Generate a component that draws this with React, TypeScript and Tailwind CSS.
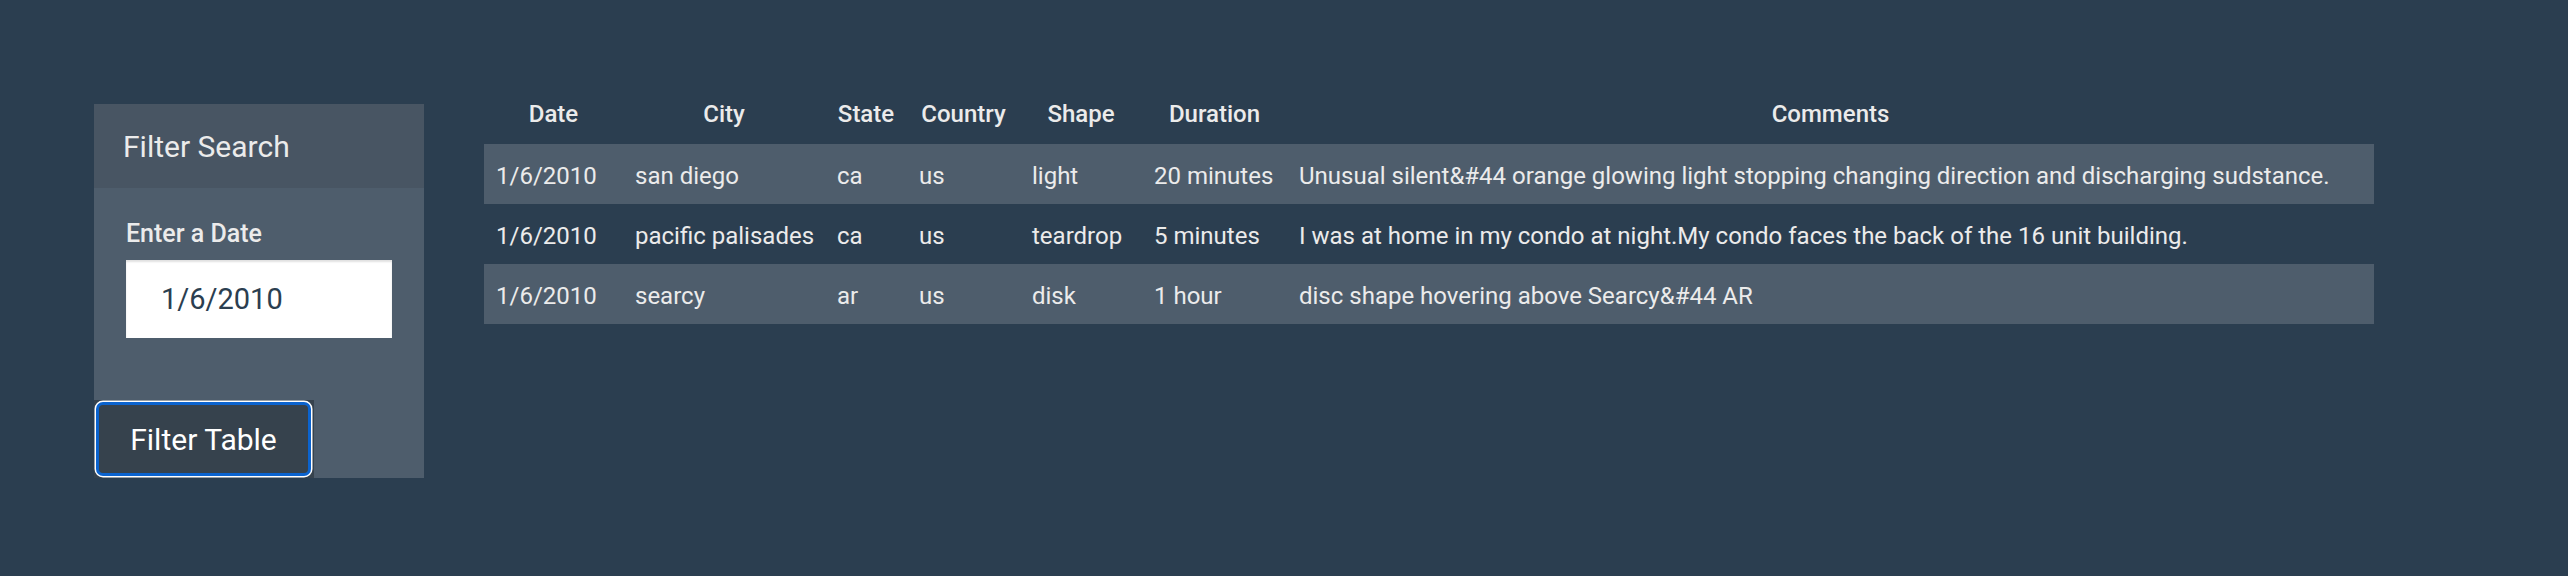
const columns = [
  { key: "date", label: "Date", width: "w-[139px]" },
  { key: "city", label: "City", width: "w-[202px]" },
  { key: "state", label: "State", width: "w-[82px]" },
  { key: "country", label: "Country", width: "w-[113px]" },
  { key: "shape", label: "Shape", width: "w-[122px]" },
  { key: "duration", label: "Duration", width: "w-[145px]" },
  { key: "comments", label: "Comments", width: "w-[1087px]" },
] as const;

type Sighting = Record<(typeof columns)[number]["key"], string>;

const sightings: Sighting[] = [
  {
    date: "1/6/2010",
    city: "san diego",
    state: "ca",
    country: "us",
    shape: "light",
    duration: "20 minutes",
    comments:
      "Unusual silent&#44 orange glowing light stopping changing direction and discharging sudstance.",
  },
  {
    date: "1/6/2010",
    city: "pacific palisades",
    state: "ca",
    country: "us",
    shape: "teardrop",
    duration: "5 minutes",
    comments: "I was at home in my condo at night.My condo faces the back of the 16 unit building.",
  },
  {
    date: "1/6/2010",
    city: "searcy",
    state: "ar",
    country: "us",
    shape: "disk",
    duration: "1 hour",
    comments: "disc shape hovering above Searcy&#44 AR",
  },
];

function FilterPanel() {
  return (
    <aside className="mt-[20px] w-[330px] shrink-0 bg-[#4e5d6c]">
      <div className="flex h-[84px] items-center bg-[#485563] pl-[29px] text-[30px]">
        Filter Search
      </div>
      <div className="px-[32px] pt-[31px]">
        <label className="mb-[11px] block text-[25px] font-medium leading-[30px]">
          Enter a Date
        </label>
        <input
          type="text"
          defaultValue="1/6/2010"
          className="block h-[78px] w-[266px] bg-white pl-[35px] text-[29px] text-[#2b3e50] shadow-[inset_0_2px_2px_rgba(0,0,0,0.12)] outline-none"
        />
      </div>
      <div className="mt-[62px] h-[78px] w-[220px] bg-[#36424d] p-[2px]">
        <button
          type="button"
          className="h-[74px] w-[215px] rounded-[7px] border-[3px] border-[#0b63ce] bg-[#36424d] text-[30px] text-white shadow-[0_0_0_1.5px_#ffffff]"
        >
          Filter Table
        </button>
      </div>
    </aside>
  );
}

function SightingsTable() {
  return (
    <table className="w-[1890px] table-fixed border-collapse text-[24px]">
      <colgroup>
        {columns.map((c) => (
          <col key={c.key} className={c.width} />
        ))}
      </colgroup>
      <thead>
        <tr className="h-[60px]">
          {columns.map((c) => (
            <th key={c.key} className="px-3 text-center font-medium">
              {c.label}
            </th>
          ))}
        </tr>
      </thead>
      <tbody>
        {sightings.map((s, i) => (
          <tr key={i} className={i % 2 === 0 ? "h-[60px] bg-[#4e5d6c]" : "h-[60px]"}>
            {columns.map((c) => (
              <td key={c.key} className="whitespace-nowrap px-3 pt-[4px] text-left">
                {s[c.key]}
              </td>
            ))}
          </tr>
        ))}
      </tbody>
    </table>
  );
}

export default function App() {
  return (
    <div className="h-[576px] bg-[#2b3e50] font-['Roboto',sans-serif] text-[#ebebeb]">
      <div className="flex items-start gap-[60px] pl-[94px] pt-[84px]">
        <FilterPanel />
        <SightingsTable />
      </div>
    </div>
  );
}
